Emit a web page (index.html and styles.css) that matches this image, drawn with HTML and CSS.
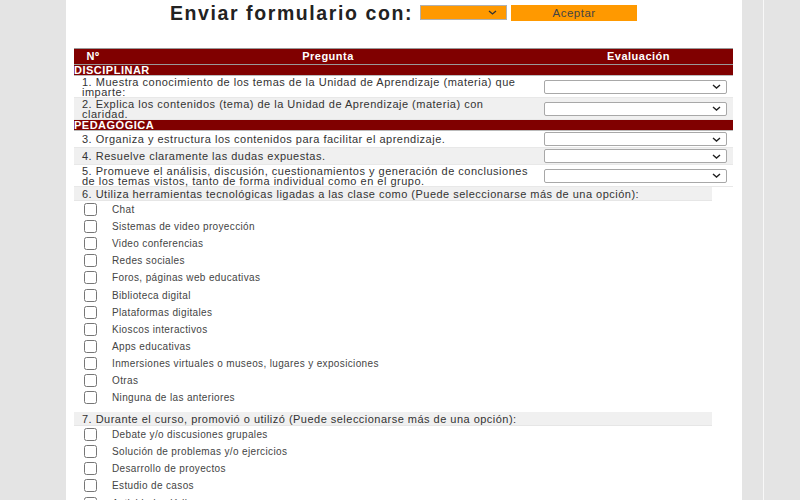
FILE: index.html
```html
<!DOCTYPE html>
<html lang="es">
<head>
<meta charset="utf-8">
<title>Evaluación</title>
<link rel="stylesheet" href="styles.css">
</head>
<body>
<div class="page">
  <div class="send">
    <span class="send-title">Enviar formulario con:</span>
    <select class="send-select"><option></option></select>
    <button class="send-btn">Aceptar</button>
  </div>
  <div class="survey">
    <div class="head">
      <div class="c-no">Nº</div><div class="c-q">Pregunta</div><div class="c-ev">Evaluación</div>
    </div>
    <div class="section">DISCIPLINAR</div>
    <div class="q tall"><div class="q-text">1. Muestra conocimiento de los temas de la Unidad de Aprendizaje (materia) que imparte:</div><div class="q-ev"><select class="eval"><option></option></select></div></div>
    <div class="q tall alt"><div class="q-text">2. Explica los contenidos (tema) de la Unidad de Aprendizaje (materia) con claridad.</div><div class="q-ev"><select class="eval"><option></option></select></div></div>
    <div class="section">PEDAGÓGICA</div>
    <div class="q"><div class="q-text">3. Organiza y estructura los contenidos para facilitar el aprendizaje.</div><div class="q-ev"><select class="eval"><option></option></select></div></div>
    <div class="q alt"><div class="q-text">4. Resuelve claramente las dudas expuestas.</div><div class="q-ev"><select class="eval"><option></option></select></div></div>
    <div class="q tall"><div class="q-text">5. Promueve el análisis, discusión, cuestionamientos y generación de conclusiones de los temas vistos, tanto de forma individual como en el grupo.</div><div class="q-ev"><select class="eval"><option></option></select></div></div>
  </div>

  <div class="multi">
    <div class="multi-title">6. Utiliza herramientas tecnológicas ligadas a las clase como (Puede seleccionarse más de una opción):</div>
    <label class="opt"><input type="checkbox"><span>Chat</span></label>
    <label class="opt"><input type="checkbox"><span>Sistemas de video proyección</span></label>
    <label class="opt"><input type="checkbox"><span>Video conferencias</span></label>
    <label class="opt"><input type="checkbox"><span>Redes sociales</span></label>
    <label class="opt"><input type="checkbox"><span>Foros, páginas web educativas</span></label>
    <label class="opt"><input type="checkbox"><span>Biblioteca digital</span></label>
    <label class="opt"><input type="checkbox"><span>Plataformas digitales</span></label>
    <label class="opt"><input type="checkbox"><span>Kioscos interactivos</span></label>
    <label class="opt"><input type="checkbox"><span>Apps educativas</span></label>
    <label class="opt"><input type="checkbox"><span>Inmersiones virtuales o museos, lugares y exposiciones</span></label>
    <label class="opt"><input type="checkbox"><span>Otras</span></label>
    <label class="opt"><input type="checkbox"><span>Ninguna de las anteriores</span></label>
  </div>

  <div class="multi">
    <div class="multi-title">7. Durante el curso, promovió o utilizó (Puede seleccionarse más de una opción):</div>
    <label class="opt"><input type="checkbox"><span>Debate y/o discusiones grupales</span></label>
    <label class="opt"><input type="checkbox"><span>Solución de problemas y/o ejercicios</span></label>
    <label class="opt"><input type="checkbox"><span>Desarrollo de proyectos</span></label>
    <label class="opt"><input type="checkbox"><span>Estudio de casos</span></label>
    <label class="opt"><input type="checkbox"><span>Actividades lúdicas</span></label>
  </div>
</div>
</body>
</html>
```
FILE: styles.css
```css
html, body {
  margin: 0;
  padding: 0;
}
body {
  height: 500px;
  overflow: hidden;
  font-family: "Liberation Sans", Arial, sans-serif;
  color: #333;
  background: linear-gradient(to right, #e4e4e4 763px, #f8f8f8 763px, #f8f8f8 764px, #e4e4e4 764px);
}
.page {
  margin-left: 66px;
  width: 676px;
  min-height: 500px;
  background: #fff;
  padding: 0 9px 0 8px;
  box-sizing: border-box;
}
.send {
  display: flex;
  justify-content: center;
  align-items: flex-start;
  gap: 4px;
  padding-top: 5px;
  height: 21px;
}
.send-title {
  font-size: 19.5px;
  font-weight: bold;
  letter-spacing: 1.6px;
  color: #222;
  margin-right: 3px;
  line-height: 16px;
}
.send-select {
  -webkit-appearance: none;
  appearance: none;
  width: 87px;
  height: 15px;
  border: 1px solid #b0b0b0;
  border-radius: 0;
  padding: 0;
  background: #ff9900 url("data:image/svg+xml,%3Csvg xmlns='http://www.w3.org/2000/svg' width='9' height='5' viewBox='0 0 9 5'%3E%3Cpath d='M1 1l3.5 3L8 1' fill='none' stroke='%23333' stroke-width='1.3'/%3E%3C/svg%3E") no-repeat right 9px center;
}
.send-btn {
  width: 126px;
  height: 16px;
  background: #ff9900;
  border: none;
  font-family: "Liberation Sans", Arial, sans-serif;
  font-size: 11.5px;
  letter-spacing: 0.5px;
  color: #444;
  padding: 0;
  line-height: 16px;
}
.survey {
  margin-top: 22px;
  width: 659px;
  font-size: 11px;
  letter-spacing: 0.5px;
}
.head {
  display: flex;
  height: 15px;
  background: #800000;
  color: #fff;
  font-weight: bold;
  border-top: 1px solid #999;
  border-bottom: 1px solid #999;
  line-height: 15px;
  text-align: center;
}
.c-no { width: 38px; }
.c-q { width: 432px; }
.c-ev { width: 189px; }
.section {
  background: #800000;
  color: #fff;
  font-weight: bold;
  height: 10px;
  line-height: 10px;
  border-bottom: 1px solid #bbb;
}
.q {
  display: flex;
  align-items: center;
  height: 16px;
  border-bottom: 1px solid #e8e8e8;
}
.q.tall {
  height: 21px;
}
.q.alt {
  background: #f0f0f0;
}
.q-text {
  width: 470px;
  box-sizing: border-box;
  padding-left: 8px;
  padding-right: 13px;
  line-height: 10px;
}
.q-ev {
  width: 189px;
}
.eval {
  -webkit-appearance: none;
  appearance: none;
  width: 183px;
  height: 14px;
  border: 1px solid #a8a8a8;
  border-radius: 2px;
  padding: 0;
  display: block;
  background: #fff url("data:image/svg+xml,%3Csvg xmlns='http://www.w3.org/2000/svg' width='9' height='5' viewBox='0 0 9 5'%3E%3Cpath d='M1 1l3.5 3L8 1' fill='none' stroke='%23222' stroke-width='1.4'/%3E%3C/svg%3E") no-repeat right 5px center;
}
.multi {
  display: flex;
  flex-direction: column;
}
.multi + .multi {
  margin-top: 6px;
}
.multi-title {
  width: 638px;
  box-sizing: border-box;
  background: #f0f0f0;
  border-bottom: 1px solid #e6e6e6;
  height: 14px;
  line-height: 14px;
  padding-left: 8px;
  font-size: 11px;
  letter-spacing: 0.48px;
  color: #333;
}
.opt {
  display: flex;
  align-items: center;
  height: 17.1px;
  padding-left: 10px;
  font-size: 10px;
  letter-spacing: 0.36px;
  color: #444;
}
.opt input {
  margin: 0 15px 0 0;
  width: 13px;
  height: 13px;
}
```
